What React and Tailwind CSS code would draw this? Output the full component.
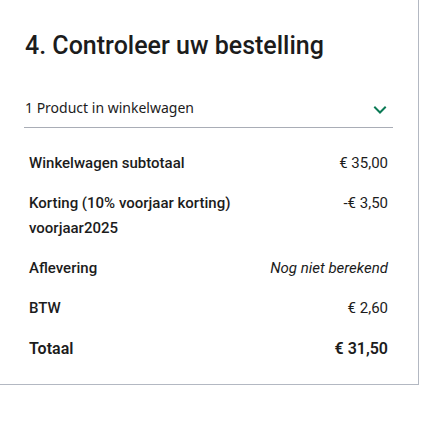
import React from 'react';

const rows = [
    { label: 'Winkelwagen subtotaal', value: '€ 35,00' },
    { label: 'Korting (10% voorjaar korting)', sub: 'voorjaar2025', value: '-€ 3,50' },
    { label: 'Aflevering', value: 'Nog niet berekend', italic: true },
    { label: 'BTW', value: '€ 2,60' },
];

const ChevronDown = () => (
    <svg width="14" height="14" viewBox="0 0 14 14" fill="none" className="mt-[5px]">
        <path d="M2 4.5 L7 9.5 L12 4.5" stroke="#0b7a55" strokeWidth="2" strokeLinecap="square" />
    </svg>
);

const App = () => {
    return (
        <div className="w-[429px] h-[441px] bg-white text-[#1c1c1c]">
            <div className="w-[419px] h-[385px] border-r border-b border-[#b3b8c2] pl-[24px] pr-[25px]">
                {/* Title */}
                <h2 className="pt-[30px] pl-[1px] text-[25px] leading-[32px] font-medium font-['Roboto',sans-serif]">
                    4. Controleer uw bestelling
                </h2>

                {/* Accordion header */}
                <div className="mt-[25px] h-[41px] flex items-center justify-between border-b border-[#a9adb6] pl-[1px] pr-[6px]">
                    <span className="text-[14px] font-['Noto_Sans',sans-serif]">1 Product in winkelwagen</span>
                    <ChevronDown />
                </div>

                {/* Summary rows */}
                <div className="pt-[23px] px-[5px] flex flex-col gap-[15px] font-['Roboto',sans-serif] text-[15px] leading-[25px]">
                    {rows.map(row => (
                        <div key={row.label} className="flex justify-between">
                            <div className="font-medium">
                                <div>{row.label}</div>
                                {row.sub && <div>{row.sub}</div>}
                            </div>
                            <div className={row.italic ? 'italic' : ''}>{row.value}</div>
                        </div>
                    ))}
                    <div className="flex justify-between text-[16px] font-semibold">
                        <div>Totaal</div>
                        <div>€ 31,50</div>
                    </div>
                </div>
            </div>
        </div>
    );
};

export default App;
